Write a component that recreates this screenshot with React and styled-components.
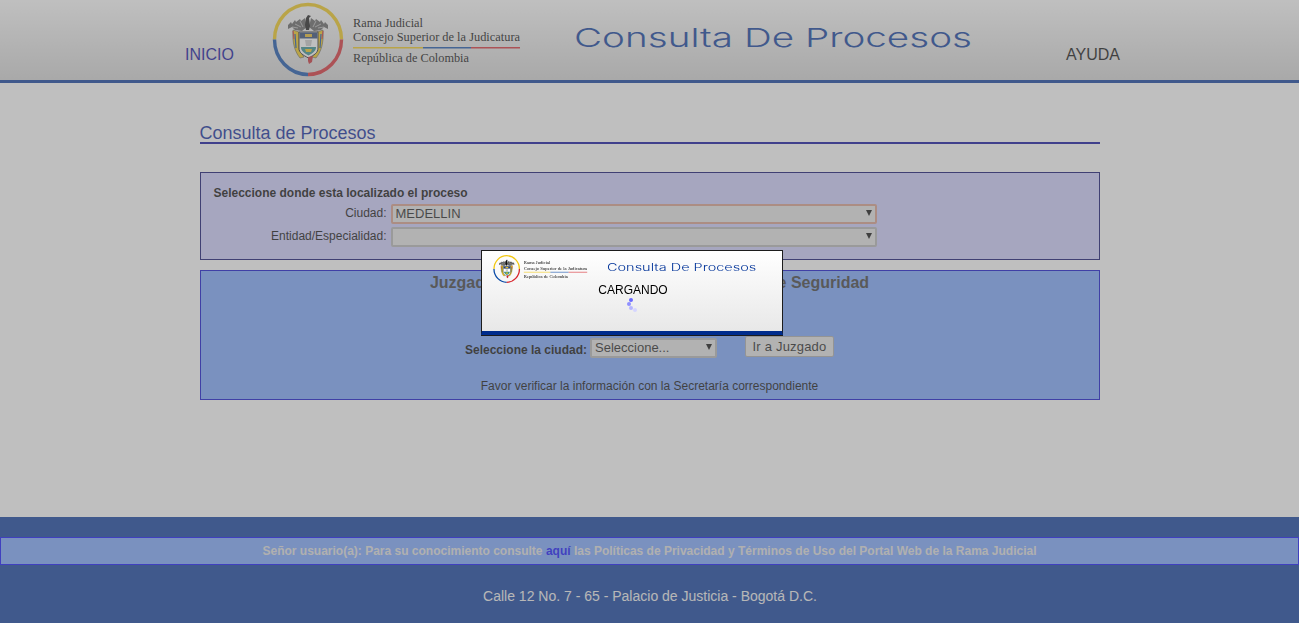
import React from 'react';
import styled, { createGlobalStyle } from 'styled-components';

const GlobalStyle = createGlobalStyle`
  html, body { margin: 0; padding: 0; background: #fff; }
  body { font-family: "Liberation Sans", Arial, sans-serif; font-size: 12px; color: #000; }
`;

const Page = styled.div`
  min-height: 100vh;
  display: flex;
  flex-direction: column;
`;

const Header = styled.header`
  height: 80px;
  display: flex;
  align-items: flex-start;
  padding-left: 185px;
  background: linear-gradient(#fff, #d2d2d2);
  border-bottom: 3px solid #003399;
`;

const NavLink = styled.a`
  margin-top: 46px;
  width: ${p => p.$width}px;
  margin-left: ${p => p.$left || 0}px;
  font-size: 16px;
  line-height: 18px;
  color: ${p => p.$color};
`;

const LogoSvg = styled.svg`
  display: block;
  flex: none;
`;

const WordmarkSvg = styled.svg`
  display: block;
  flex: none;
  margin-top: ${p => p.$top}px;
  margin-left: ${p => p.$left}px;
`;

const Logo = ({ width }) => (
  <LogoSvg width={width} height={width * 0.312} viewBox="0 0 250 78">
    {/* anillo tricolor */}
    <path d="M2.500 39.500a33.500 35 0 0 1 67 0" fill="none" stroke="#f2c811" strokeWidth="3.4" />
    <path d="M2.500 39.500a33.500 35 0 0 0 33.500 35" fill="none" stroke="#0a4ba8" strokeWidth="3.4" />
    <path d="M36 74.500a33.500 35 0 0 0 33.500-35" fill="none" stroke="#d8242c" strokeWidth="3.4" />
    {/* condor */}
    <path d="M16 25l3-3 1 2 3-4 1 2 4-3 1 2 4-3 2 9-5 4-7-1-3-3-4 2z" fill="#5c5c5c" />
    <path d="M56 25l-3-3-1 2-3-4-1 2-4-3-1 2-4-3-2 9 5 4 7-1 3-3 4 2z" fill="#5c5c5c" />
    <path d="M20 27l6 1M23 24l6 3M28 21l3 6M52 27l-6 1M49 24l-6 3M44 21l-3 6" stroke="#ddd" strokeWidth="0.7" />
    <path d="M34 18l2-3 3 1-2 2 1 8-1 4h-3l-1-5z" fill="#111" />
    {/* banderas */}
    <path d="M21 30l6 2v18l5 7-4 1c-5-6-8-15-7-28z" fill="#f2c811" stroke="#333" strokeWidth="0.5" />
    <path d="M51 30l-6 2v18l-5 7 4 1c5-6 8-15 7-28z" fill="#f2c811" stroke="#333" strokeWidth="0.5" />
    <path d="M23 34l1 14M49 34l-1 14" stroke="#0a4ba8" strokeWidth="1.2" />
    <path d="M21 31l1 8M51 31l-1 8" stroke="#d8242c" strokeWidth="1" />
    {/* escudo */}
    <path d="M27 32h19v16c0 5-4 7-9.500 10C31 55 27 53 27 48z" fill="#fff" stroke="#222" strokeWidth="1" />
    <path d="M27.500 32.500h18v6h-18z" fill="#26406e" />
    <path d="M33 34h7v3h-7z" fill="#e8b820" />
    <path d="M33 40h7l-1 6h-5z" fill="#c9c9c9" />
    <path d="M29 47h15c0 4-3 6-7.500 8.500C32 53 29 51 29 47z" fill="#2a8a8a" />
    <path d="M33 49h7l-1 3h-5z" fill="#f2c811" />
    <path d="M36 57l5-1-1 6-3 2-1-3z" fill="#c8242c" />
    <text x="81" y="27" fontFamily="Liberation Serif, serif" fontSize="13" fill="#000" textLength="70" lengthAdjust="spacingAndGlyphs">Rama Judicial</text>
    <text x="81" y="41" fontFamily="Liberation Serif, serif" fontSize="13" fill="#000" textLength="167" lengthAdjust="spacingAndGlyphs">Consejo Superior de la Judicatura</text>
    <rect x="81" y="47" width="70" height="1.500" fill="#f2c811" />
    <rect x="151" y="47" width="48" height="1.500" fill="#0a4ba8" />
    <rect x="199" y="47" width="49" height="1.500" fill="#d8242c" />
    <text x="81" y="62" fontFamily="Liberation Serif, serif" fontSize="13" fill="#000" textLength="116" lengthAdjust="spacingAndGlyphs">República de Colombia</text>
  </LogoSvg>
);

const Wordmark = ({ width, top, left }) => (
  <WordmarkSvg width={width} height={width * 0.08} viewBox="0 0 400 32" $top={top} $left={left}>
    <text x="0" y="23" fontFamily="Inter, sans-serif" fontSize="26" fontWeight="300" fill="#003399" textLength="398" lengthAdjust="spacingAndGlyphs">Consulta De Procesos</text>
  </WordmarkSvg>
);

const Main = styled.main`
  flex: 1;
  width: 900px;
  margin: 0 auto;
  padding-top: 40px;
`;

const Title = styled.h1`
  margin: 0 0 28px;
  height: 19px;
  font-size: 18px;
  font-weight: normal;
  line-height: 20px;
  color: #001a99;
  border-bottom: 2px solid #000099;
`;

const Panel = styled.section`
  box-sizing: border-box;
  height: ${p => p.$height}px;
  margin-bottom: 10px;
  background: ${p => p.$bg};
  border: 1px solid ${p => p.$border};
`;

const LocationPanel = styled(Panel)`
  padding: 13px 13px 0;
`;

const Strong = styled.div`
  font-size: 12px;
  font-weight: bold;
  line-height: 14px;
  color: #000;
`;

const FormGrid = styled.div`
  display: grid;
  grid-template-columns: 173px 486px;
  column-gap: 4px;
  row-gap: 3px;
  margin-top: 4px;
`;

const FieldLabel = styled.label`
  text-align: right;
  font-size: 12px;
  line-height: 18px;
`;

const SelectWrap = styled.div`
  position: relative;
  width: ${p => p.$width || 486}px;
  height: 20px;
  margin-top: ${p => p.$top || 0}px;

  &::after {
    content: '';
    position: absolute;
    right: 5px;
    top: 6px;
    border-left: 3.5px solid transparent;
    border-right: 3.5px solid transparent;
    border-top: 6px solid #000;
  }
`;

const Select = styled.select`
  appearance: none;
  display: block;
  box-sizing: border-box;
  width: 100%;
  height: 100%;
  padding: 0 3px 2px;
  font-family: "Liberation Sans", Arial, sans-serif;
  font-size: 13px;
  color: #111;
  background: #e4e4e4;
  border: 2px solid ${p => (p.$focus ? '#d99a86' : '#b4b4b4')};
  border-radius: 2px;
  opacity: 1;
`;

const CourtPanel = styled(Panel)`
  padding-top: 3px;
  text-align: center;
`;

const CourtHeading = styled.h2`
  margin: 0;
  font-size: 16px;
  font-weight: bold;
  line-height: 18px;
  color: #333;
`;

const CityRow = styled.div`
  display: flex;
  justify-content: center;
  align-items: flex-start;
  margin-top: 44px;
`;

const CityLabel = styled(Strong)`
  margin: 7px 3px 0 0;
`;

const GoButton = styled.button`
  box-sizing: border-box;
  width: 89px;
  height: 21px;
  margin-left: 28px;
  padding: 0;
  font-family: "Liberation Sans", Arial, sans-serif;
  font-size: 13px;
  letter-spacing: 0.2px;
  color: #111;
  background: #e4e4e4;
  border: 1px solid #a8a8a8;
  border-radius: 2px;
`;

const Notice = styled.p`
  margin: 21px 0 0;
  font-size: 12px;
  line-height: 14px;
`;

const Footer = styled.footer`
  box-sizing: border-box;
  height: 106px;
  padding-top: 20px;
  background: #003399;
  text-align: center;
`;

const PolicyBar = styled.div`
  box-sizing: border-box;
  height: 28px;
  font-size: 12px;
  font-weight: bold;
  line-height: 26px;
  color: #e0e0e0;
  background: #74a2ff;
  border: 1px solid #0000ff;
`;

const PolicyLink = styled.a`
  color: #0000ff;
`;

const Address = styled.p`
  margin: 23px 0 0;
  padding-left: 1px;
  font-size: 14px;
  line-height: 16px;
  color: #eee;
`;

const Overlay = styled.div`
  position: fixed;
  inset: 0;
  background: rgba(128, 128, 128, 0.5);
`;

const Modal = styled.div`
  position: fixed;
  left: 481px;
  top: 250px;
  box-sizing: border-box;
  width: 302px;
  height: 85px;
  background: linear-gradient(#fff, #e8e8e8);
  border: 1px solid #1c1c1c;
  border-bottom: 4px solid #002c8c;
  box-shadow: 0 1px 0 #1c1c1c;
`;

const ModalTop = styled.div`
  display: flex;
  align-items: flex-start;
  height: 29px;
  padding: 3px 0 0 11px;
`;

const Loading = styled.div`
  padding-left: 2px;
  text-align: center;
  font-size: 12px;
  line-height: 14px;
`;

const SpinnerSvg = styled.svg`
  display: block;
  margin: 0 0 0 139px;
`;

const Spinner = () => (
  <SpinnerSvg width="20" height="18" viewBox="0 0 20 18">
    <circle cx="10" cy="3" r="2" fill="#6a6aff" />
    <circle cx="8" cy="7" r="2" fill="#8f8fff" />
    <circle cx="10" cy="11" r="2" fill="#b5b5ff" />
    <circle cx="14" cy="13" r="2" fill="#d5d5ff" />
  </SpinnerSvg>
);

export default function App() {
  return (
    <Page>
      <GlobalStyle />
      <Header>
        <NavLink $width={87} $color="#000099">INICIO</NavLink>
        <Logo width={250} />
        <Wordmark width={400} top={24} left={52} />
        <NavLink $width={60} $left={92} $color="#000">AYUDA</NavLink>
      </Header>
      <Main>
        <Title>Consulta de Procesos</Title>
        <LocationPanel $height={88} $bg="#ccccff" $border="#000066">
          <Strong>Seleccione donde esta localizado el proceso</Strong>
          <FormGrid>
            <FieldLabel>Ciudad:</FieldLabel>
            <SelectWrap>
              <Select $focus defaultValue="MEDELLIN">
                <option>MEDELLIN</option>
              </Select>
            </SelectWrap>
            <FieldLabel>Entidad/Especialidad:</FieldLabel>
            <SelectWrap>
              <Select defaultValue="">
                <option value=""></option>
              </Select>
            </SelectWrap>
          </FormGrid>
        </LocationPanel>
        <CourtPanel $height={130} $bg="#74a2ff" $border="#0000cc">
          <CourtHeading>Juzgados de Ejecución de Penas y Medidas de Seguridad</CourtHeading>
          <CityRow>
            <CityLabel>Seleccione la ciudad:</CityLabel>
            <SelectWrap $width={127} $top={2}>
              <Select defaultValue="Seleccione...">
                <option>Seleccione...</option>
              </Select>
            </SelectWrap>
            <GoButton>Ir a Juzgado</GoButton>
          </CityRow>
          <Notice>Favor verificar la información con la Secretaría correspondiente</Notice>
        </CourtPanel>
      </Main>
      <Footer>
        <PolicyBar>
          Señor usuario(a): Para su conocimiento consulte <PolicyLink>aquí</PolicyLink> las Políticas de Privacidad y Términos de Uso del Portal Web de la Rama Judicial
        </PolicyBar>
        <Address>Calle 12 No. 7 - 65 - Palacio de Justicia - Bogotá D.C.</Address>
      </Footer>
      <Overlay />
      <Modal>
        <ModalTop>
          <Logo width={95} />
          <Wordmark width={150} top={8} left={19} />
        </ModalTop>
        <Loading>CARGANDO</Loading>
        <Spinner />
      </Modal>
    </Page>
  );
}
